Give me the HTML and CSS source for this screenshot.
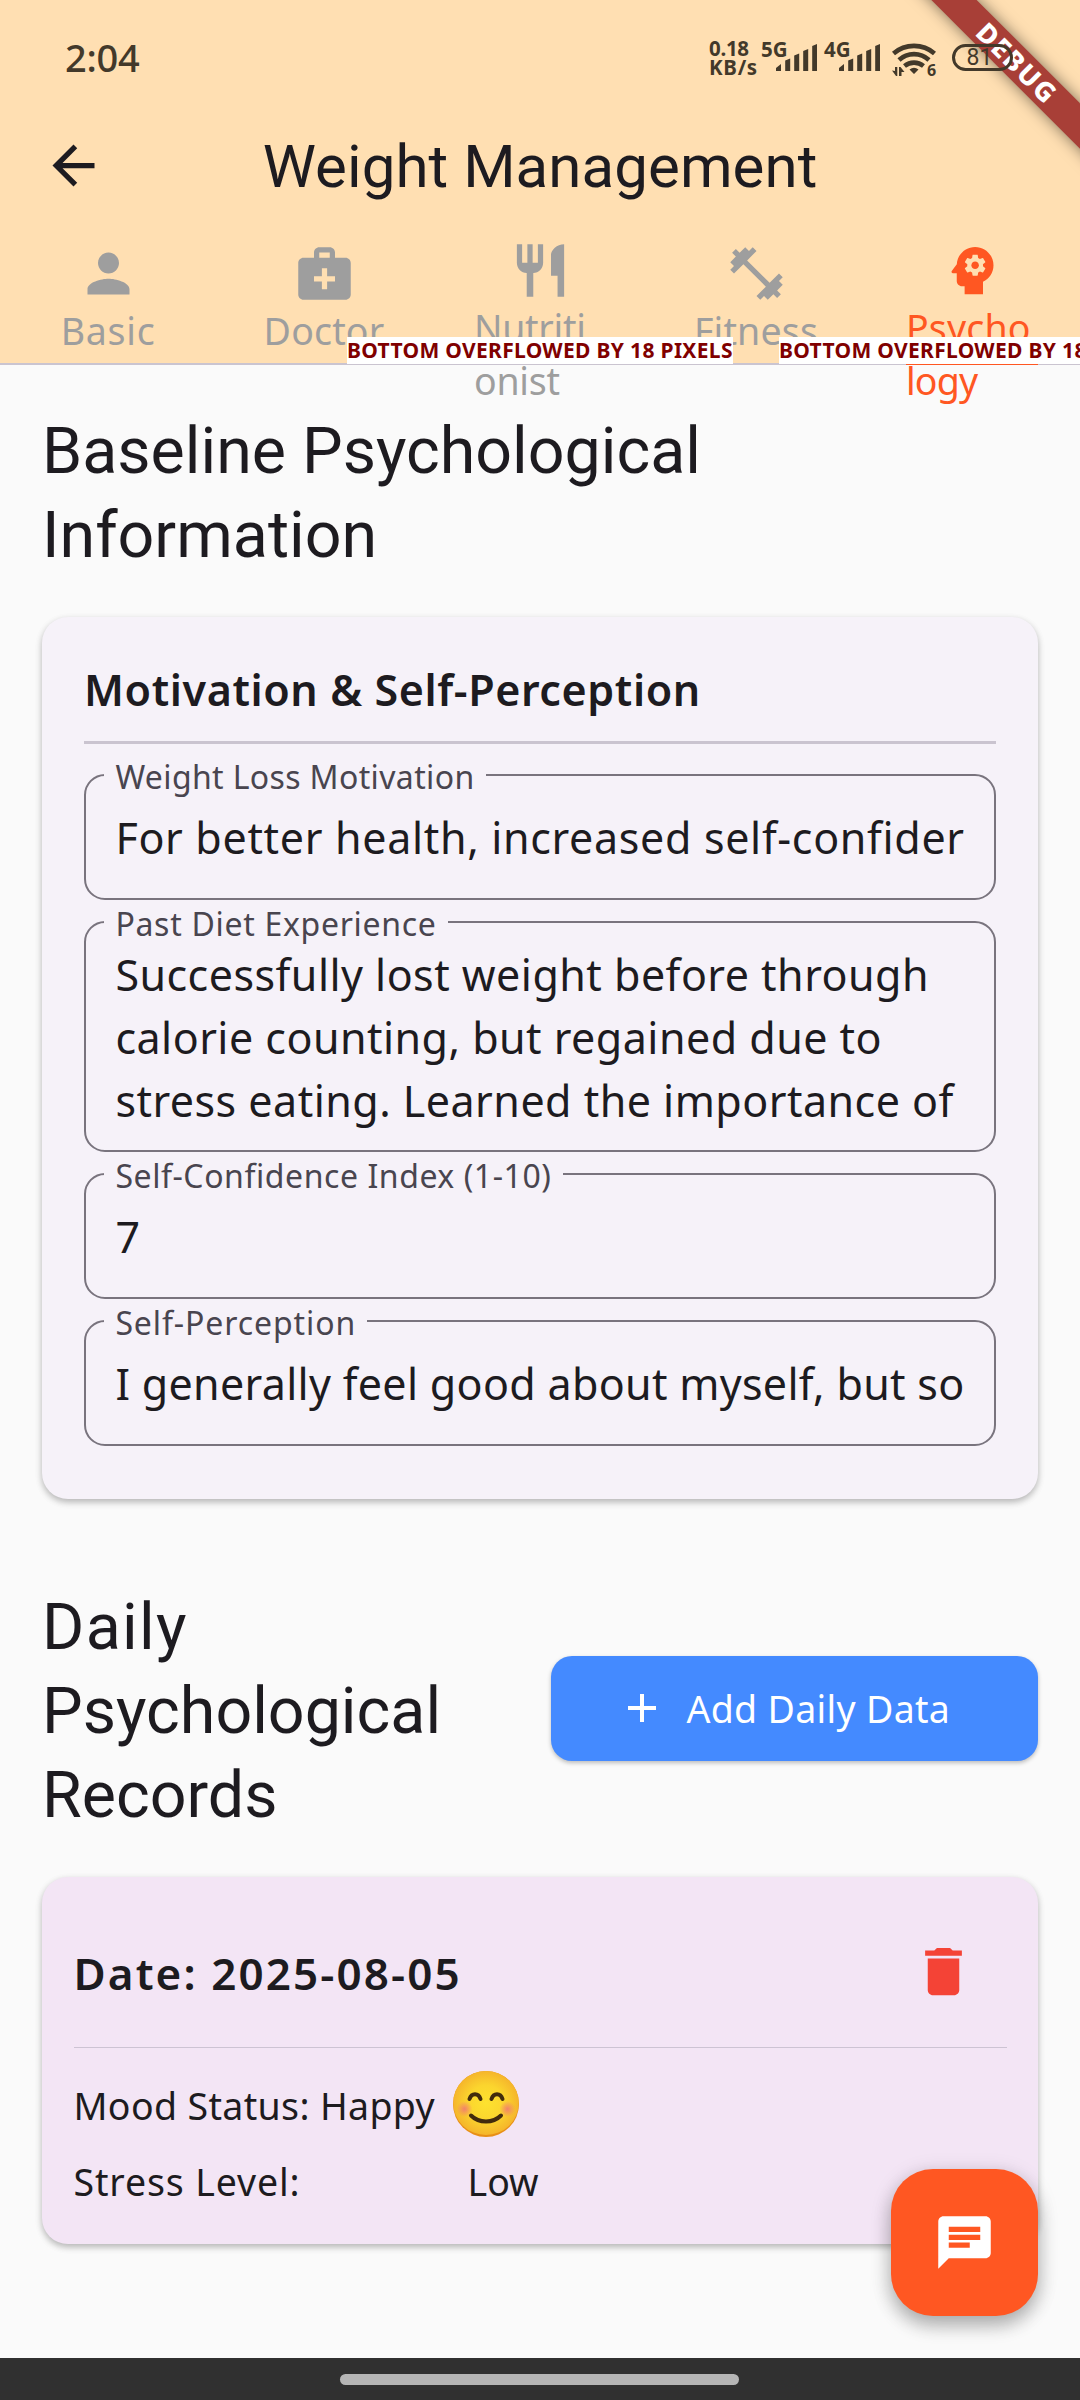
FILE: index.html
```html
<!DOCTYPE html>
<html lang="en">
<head>
<meta charset="utf-8">
<title>Weight Management</title>
<link rel="stylesheet" href="styles.css">
</head>
<body>
<div class="screen">
  <header class="header">
    <div class="status">
      <span class="clock">2:04</span>
      <div class="status-right">
        <div class="speed"><span>0.18</span><span class="unit">KB/s</span></div>
        <div class="network"><span>5G</span><svg viewBox="0 0 41 27"><path d="M0 27v-3l5-4v7zM9.2 27V16.500l5-2V27zM18.200 27V11.500l5-2V27zM27.200 27V7l5-2v22zM36.200 27V2l5-2v27z"/></svg></div>
        <div class="network network-4g"><span>4G</span><svg viewBox="0 0 41 27"><path d="M0 27v-3l5-4v7zM9.2 27V16.500l5-2V27zM18.200 27V11.500l5-2V27zM27.200 27V7l5-2v22zM36.200 27V2l5-2v27z"/></svg></div>
        <svg class="wifi" viewBox="0 0 44 34"><g fill="none" stroke="#43392a" stroke-width="4.600"><path d="M1.500 11.500a31.500 31.500 0 0 1 41 0"/><path d="M7 18a22 22 0 0 1 30 0"/><path d="M12.500 24a15 15 0 0 1 19 0"/></g><path d="M17.500 27.500q4.500-3.500 9 0L22 32zM0 28.500l4 5.500h1.300v-9H3v4zM7 34v-9h1.500l4 5H9.500v4z"/><text x="35" y="33.500">6</text></svg>
        <div class="battery">81</div>
      </div>
    </div>
    <div class="appbar">
      <svg class="icon" viewBox="0 0 24 24"><path d="M20 11H7.830l5.590-5.590L12 4l-8 8 8 8 1.410-1.410L7.830 13H20v-2z"/></svg>
      <h1>Weight Management</h1>
    </div>
    <nav class="tabs">
      <div class="tab"><svg class="icon" viewBox="0 0 24 24"><path d="M12 12c2.210 0 4-1.790 4-4s-1.790-4-4-4-4 1.790-4 4 1.790 4 4 4zm0 2c-2.670 0-8 1.340-8 4v2h16v-2c0-2.660-5.330-4-8-4z"/></svg><span class="tab-label ls-basic">Basic</span></div>
      <div class="tab"><svg class="icon" viewBox="0 0 24 24"><path d="M20 6h-4V4c0-1.100-.9-2-2-2h-4c-1.100 0-2 .9-2 2v2H4c-1.100 0-2 .9-2 2v12c0 1.100.9 2 2 2h16c1.100 0 2-.9 2-2V8c0-1.100-.9-2-2-2zM10 4h4v2h-4V4zm6 11h-3v3h-2v-3H8v-2h3v-3h2v3h3v2z"/></svg><span class="tab-label">Doctor</span></div>
      <div class="tab tab-tall"><svg class="icon" viewBox="0 0 24 24"><path d="M11 9H9V2H7v7H5V2H3v7c0 2.120 1.660 3.840 3.750 3.970V22h2.500v-9.030C11.340 12.840 13 11.120 13 9V2h-2v7zm5-3v8h2.500v8H21V2c-2.760 0-5 2.240-5 4z"/></svg><span class="tab-label ls-nutri">Nutriti<br>onist</span><span class="overflow-note">BOTTOM OVERFLOWED BY 18 PIXELS</span></div>
      <div class="tab"><svg class="icon" viewBox="0 0 24 24"><path d="M20.570 14.860L22 13.430 20.570 12 17 15.570 8.430 7 12 3.430 10.570 2 9.140 3.430 7.710 2 5.570 4.140 4.140 2.710 2.710 4.140l1.430 1.430L2 7.710l1.430 1.430L2 10.570 3.430 12 7 8.430 15.570 17 12 20.570 13.430 22l1.430-1.430L16.290 22l2.140-2.140 1.430 1.430 1.430-1.430-1.430-1.430L22 16.290z"/></svg><span class="tab-label">Fitness</span></div>
      <div class="tab tab-tall tab-active"><svg class="icon" viewBox="0 0 24 24"><path d="M13 8.570c-.79 0-1.430.64-1.430 1.430s.64 1.430 1.430 1.430 1.430-.64 1.430-1.430-.64-1.430-1.430-1.430z"/><path d="M13 3C9.250 3 6.200 5.940 6.020 9.640L4.100 12.200c-.25.33-.01.8.4.8H6v3c0 1.100.9 2 2 2h1v3h7v-4.680c2.360-1.120 4-3.530 4-6.320 0-3.870-3.130-7-7-7zm3 7c0 .13-.01.26-.02.39l.83.66c.08.06.1.16.05.25l-.8 1.390c-.05.09-.16.12-.24.09l-.99-.4c-.21.16-.43.29-.67.39L14 13.830c-.01.1-.1.17-.2.17h-1.600c-.1 0-.18-.07-.2-.17l-.15-1.060c-.25-.1-.47-.23-.68-.39l-.99.4c-.09.03-.2 0-.25-.09l-.8-1.390c-.05-.08-.03-.19.05-.25l.84-.66c-.01-.13-.02-.26-.02-.39s.02-.27.04-.39l-.85-.66c-.08-.06-.1-.16-.05-.26l.8-1.380c.05-.09.15-.12.24-.09l1 .4c.2-.15.43-.29.67-.39L12 6.170c.02-.1.1-.17.2-.17h1.600c.1 0 .18.07.2.17l.15 1.060c.24.1.46.23.67.39l1-.4c.09-.03.2 0 .24.09l.8 1.380c.05.09.03.2-.05.26l-.85.66c.03.12.04.25.04.39z"/></svg><span class="tab-label">Psycho<br><span class="ls-logy">logy</span></span><span class="overflow-note">BOTTOM OVERFLOWED BY 18 PIXELS</span></div>
    </nav>
  </header>
  <main class="main">
    <h2 class="heading">Baseline Psychological<br>Information</h2>
    <section class="card">
      <h3 class="card-title">Motivation &amp; Self-Perception</h3>
      <hr class="rule">
      <fieldset class="field"><legend class="ls-motivation">Weight Loss Motivation</legend><div class="value ls-reason">For better health, increased self-confider</div></fieldset>
      <fieldset class="field field-multi"><legend>Past Diet Experience</legend><div class="value">Successfully lost weight before through<br>calorie counting, but regained due to<br>stress eating. Learned the importance of</div></fieldset>
      <fieldset class="field"><legend class="ls-index">Self-Confidence Index (1-10)</legend><div class="value">7</div></fieldset>
      <fieldset class="field"><legend class="ls-self">Self-Perception</legend><div class="value ls-feel">I generally feel good about myself, but so</div></fieldset>
    </section>
    <div class="records-head">
      <h2 class="heading"><span class="ls-daily">Daily</span><br>Psychological<br>Records</h2>
      <button class="add"><svg viewBox="0 0 28 28"><path d="M12 0h4v12h12v4H16v12h-4V16H0v-4h12z"/></svg><span>Add Daily Data</span></button>
    </div>
    <section class="record">
      <div class="record-head"><h3 class="card-title ls-date">Date: 2025-08-05</h3><svg class="icon" viewBox="0 0 24 24"><path d="M6 19c0 1.100.9 2 2 2h8c1.100 0 2-.9 2-2V7H6v12zM19 4h-3.500l-1-1h-5l-1 1H5v2h14V4z"/></svg></div>
      <hr class="rule rule-thin">
      <div class="mood"><span>Mood Status: Happy</span><svg class="emoji" viewBox="0 0 68 68"><defs><radialGradient id="face"><stop offset="0" stop-color="#fde22f"/><stop offset=".55" stop-color="#fbd52e"/><stop offset="1" stop-color="#f5b52b"/></radialGradient><radialGradient id="cheek"><stop offset="0" stop-color="#f2826b"/><stop offset="1" stop-color="#f2826b" stop-opacity="0"/></radialGradient></defs><circle cx="34" cy="34" r="33" fill="#e88f16"/><ellipse cx="34" cy="33" rx="32.800" ry="32" fill="url(#face)"/><circle cx="12.500" cy="39" r="8" fill="url(#cheek)"/><circle cx="55.500" cy="39" r="8" fill="url(#cheek)"/><g fill="none" stroke="#422b0d" stroke-width="4" stroke-linecap="round"><path d="M17.500 29c2-6.500 9-6.500 11 0M39.500 29c2-6.500 9-6.500 11 0M19 45.500c8 8 22 8 30 0"/></g></svg></div>
      <div class="stress"><span class="ls-stress">Stress Level:</span><span class="low">Low</span></div>
    </section>
  </main>
  <footer class="navbar"><i class="pill"></i></footer>
  <button class="fab"><svg class="icon" viewBox="0 0 24 24"><path d="M20 2H4c-1.100 0-1.990.9-1.990 2L2 22l4-4h14c1.100 0 2-.9 2-2V4c0-1.100-.9-2-2-2zM6 9h12v2H6V9zm8 5H6v-2h8v2zm4-6H6V6h12v2z"/></svg></button>
  <div class="banner">DEBUG</div>
</div>
</body>
</html>
```
FILE: styles.css
```css
* { box-sizing: border-box; }
body { margin: 0; background: #fafafa; font-family: "Noto Sans", "Open Sans", sans-serif; color: #1d1b20; }
h1, h2, h3 { margin: 0; font-weight: 400; }
button { border: 0; padding: 0; font: inherit; color: #fff; }
.icon { display: block; width: 63px; height: 63px; fill: currentColor; flex: none; }
.screen { position: relative; width: 1080px; height: 2400px; overflow: hidden; display: flex; flex-direction: column; }

/* Status bar, title and tabs */
.header { height: 365px; background: #ffdfb2; flex: none; }
.status { height: 92px; display: flex; justify-content: space-between; padding: 30px 67px 0 65px; color: #43392a; fill: #43392a; }
.clock { font-size: 38px; line-height: 55px; font-weight: 500; letter-spacing: -.3px; }
.status-right { display: flex; position: relative; z-index: 3; font-weight: 700; font-size: 20.500px; }
.speed { display: flex; flex-direction: column; width: 52px; line-height: 18.500px; padding-top: 9px; letter-spacing: -.3px; }
.unit { letter-spacing: .7px; }
.network { display: grid; width: 56px; height: 41px; margin-right: 7px; }
.network span, .network svg { grid-area: 1 / 1; }
.network span { line-height: 18px; padding-top: 10px; }
.network svg { width: 41px; height: 27px; place-self: end; }
.network-4g { margin-right: 12px; }
.wifi { width: 44px; height: 34px; margin: 12px 16px 0 0; font-size: 16px; overflow: visible; }
.battery { width: 61px; height: 27px; margin-top: 14px; border: 3px solid #43392a; border-radius: 14px; text-align: center; font-family: Roboto, sans-serif; font-size: 23px; line-height: 22px; font-weight: 400; padding-right: 6px; }

.appbar { height: 147px; display: flex; align-items: center; padding: 0 41.700px; }
.appbar h1 { font-family: Roboto, sans-serif; font-size: 60px; line-height: 80px; letter-spacing: .07px; margin-left: 158px; padding-top: 2px; white-space: nowrap; }

.tabs { height: 126px; display: grid; grid-template-columns: repeat(5, 216px); border-bottom: 2.600px solid #cac4d0; color: #9e9e9e; }
.tab { position: relative; display: flex; flex-direction: column; align-items: center; padding-top: 3px; height: 126px; }
.tab-tall { padding-top: 0; }
.tab-label { font-size: 37.500px; line-height: 52.500px; letter-spacing: .17px; white-space: nowrap; }
.tab-tall .tab-label { width: 132px; }
.tab-active { color: #ff5722; }
.tab-active::after { content: ""; position: absolute; left: 42px; bottom: 0; width: 132px; height: 5px; background: #ff5722; }
.overflow-note { position: absolute; z-index: 1; left: -85px; top: 98px; width: 386px; height: 26.500px; background: #fff; color: #800000; font-size: 21px; font-weight: 700; line-height: 27px; letter-spacing: .32px; white-space: nowrap; }

/* Baseline information */
.main { flex: 1; padding: 44.200px 42px 0; }
.heading { font-family: Roboto, sans-serif; font-size: 64.500px; line-height: 84px; white-space: nowrap; }
.card { height: 882px; margin-top: 40px; padding: 43px 42px 0; border-radius: 26px; background: #f6f2f9; box-shadow: 0 3px 6px rgba(0,0,0,.22), 0 3px 9px rgba(0,0,0,.08); }
.card-title { font-size: 43px; line-height: 60px; font-weight: 600; letter-spacing: .6px; white-space: nowrap; }
.rule { border: 0; height: 2.600px; margin: 21px 0 14.200px; background: #cac4d0; }
.field { height: 142.100px; margin: 0 0 4.900px; padding: 0 18.400px; border: 2.600px solid #79747e; border-radius: 21px; min-width: 0; }
.field legend { padding: 3px 11px 0; font-size: 32px; line-height: 32px; letter-spacing: .7px; color: #49454f; }
.field .value { margin: 13px 0 0 11px; font-size: 43px; line-height: 63px; letter-spacing: .47px; white-space: nowrap; }
.field-multi { height: 247.100px; }
.field-multi .value { margin-top: 3px; }

/* Daily records */
.records-head { display: flex; align-items: center; justify-content: space-between; margin-top: 80px; }
.records-head .heading { padding-top: 6px; }
.add { width: 487.500px; height: 105px; border-radius: 21px; background: #448aff; display: flex; align-items: center; padding-left: 77px; gap: 31px; font-size: 37.500px; letter-spacing: .3px; box-shadow: 0 2px 4px rgba(0,0,0,.25); }
.add svg { width: 28px; height: 28px; fill: #fff; }
.record { height: 367px; margin-top: 40.300px; padding: 31.400px 31.500px 0; border-radius: 26px; background: #f3e5f5; box-shadow: 0 3px 6px rgba(0,0,0,.22), 0 3px 9px rgba(0,0,0,.08); }
.record-head { height: 126px; display: flex; align-items: center; justify-content: space-between; padding-right: 31.500px; }
.record-head .card-title { padding-top: 2px; }
.record-head .icon { color: #f44336; }
.rule-thin { height: 1px; margin: 12.500px 0 21.800px; background: #cdc3d3; }
.mood { height: 68px; display: flex; align-items: center; font-size: 37.500px; letter-spacing: .35px; }
.mood span { padding-top: 2px; }
.emoji { width: 68px; height: 68px; margin-left: 17px; }
.stress { display: grid; grid-template-columns: 394px auto; margin-top: 17.500px; font-size: 37.500px; line-height: 52px; }

.navbar { height: 42px; background: #303030; display: flex; justify-content: center; padding: 16px 1px 0 0; }
.pill { width: 399px; height: 11px; border-radius: 6px; background: #b5b5b5; }
.fab { position: absolute; left: 891px; top: 2169px; width: 147px; height: 147px; border-radius: 42px; background: #ff5722; display: grid; place-items: center; box-shadow: 0 10px 18px rgba(0,0,0,.24), 0 4px 22px rgba(0,0,0,.14); }
.banner { position: absolute; left: 867px; top: 47px; width: 300px; height: 32px; background: #a83f37; transform: rotate(45deg); text-align: center; color: #fff; font-size: 27px; line-height: 31px; font-weight: 800; letter-spacing: 1.700px; box-shadow: 0 0 15px rgba(0,0,0,.5); z-index: 2; }

/* Tracking of single labels */
.ls-basic { letter-spacing: .74px; }
.tab-label.ls-nutri { letter-spacing: -.28px; }
.ls-logy { letter-spacing: -.8px; }
.field .ls-motivation { letter-spacing: .36px; }
.field .ls-index { letter-spacing: .56px; }
.field .ls-self { letter-spacing: .9px; }
.field .ls-reason { letter-spacing: .67px; }
.field .ls-feel { letter-spacing: .31px; }
.ls-daily { letter-spacing: 1.300px; }
.ls-date { font-size: 44px; letter-spacing: 2.100px; }
.ls-stress { letter-spacing: .87px; }
```
